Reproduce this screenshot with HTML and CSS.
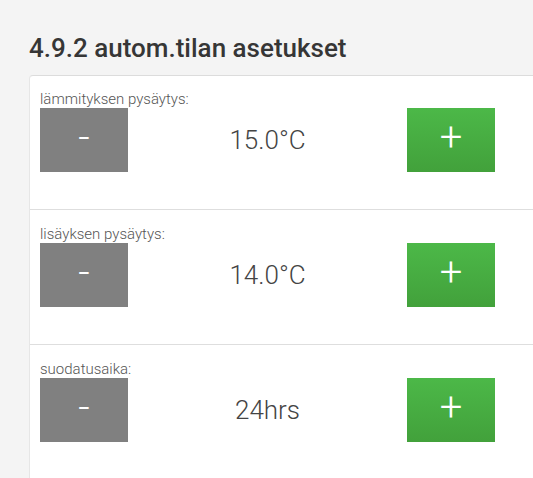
FILE: index.html
```html
<!DOCTYPE html>
<html lang="fi">
<head>
<meta charset="utf-8">
<title>4.9.2 autom.tilan asetukset</title>
<link rel="stylesheet" href="styles.css">
</head>
<body>
<div class="page">
  <h1 class="title">4.9.2 autom.tilan asetukset</h1>
  <div class="card">
    <div class="row">
      <div class="label">lämmityksen pysäytys:</div>
      <div class="controls">
        <button class="btn btn-minus">-</button>
        <div class="value">15.0°C</div>
        <button class="btn btn-plus">+</button>
      </div>
    </div>
    <div class="row">
      <div class="label">lisäyksen pysäytys:</div>
      <div class="controls">
        <button class="btn btn-minus">-</button>
        <div class="value">14.0°C</div>
        <button class="btn btn-plus">+</button>
      </div>
    </div>
    <div class="row">
      <div class="label">suodatusaika:</div>
      <div class="controls">
        <button class="btn btn-minus">-</button>
        <div class="value">24hrs</div>
        <button class="btn btn-plus">+</button>
      </div>
    </div>
  </div>
</div>
</body>
</html>
```
FILE: styles.css
```css
html, body {
  margin: 0;
  padding: 0;
  background: #f4f4f4;
  overflow: hidden;
  font-family: Roboto, "Liberation Sans", sans-serif;
}

.page {
  padding: 32px 0 0 29px;
}

.title {
  margin: 0 0 11px 0;
  font-size: 26px;
  line-height: 32px;
  font-weight: 500;
  color: #363636;
}

.card {
  background: #fff;
  border: 1px solid #e6e6e6;
  border-top-color: #dcdcdc;
  border-right: none;
  border-radius: 4px 0 0 0;
}

.row {
  padding: 15px 38px 37px 10px;
  border-top: 1px solid #dedede;
}

.row:first-child {
  border-top: none;
  padding-top: 14px;
}

.label {
  font-size: 15px;
  line-height: 18px;
  font-weight: 300;
  color: #555;
}

.controls {
  display: flex;
  align-items: center;
}

.value {
  flex: 1;
  text-align: center;
  font-size: 26px;
  font-weight: 300;
  color: #444;
}

.btn {
  width: 88px;
  height: 64px;
  border: none;
  padding: 0 0 4px 0;
  margin: 0;
  color: #fff;
  font-family: Roboto, "Liberation Sans", sans-serif;
  font-size: 40px;
  font-weight: 300;
  line-height: 1;
  display: flex;
  align-items: center;
  justify-content: center;
}

.btn-minus {
  background: #808080;
}

.btn-plus {
  background: linear-gradient(#4cb848, #42a13b);
}
```
